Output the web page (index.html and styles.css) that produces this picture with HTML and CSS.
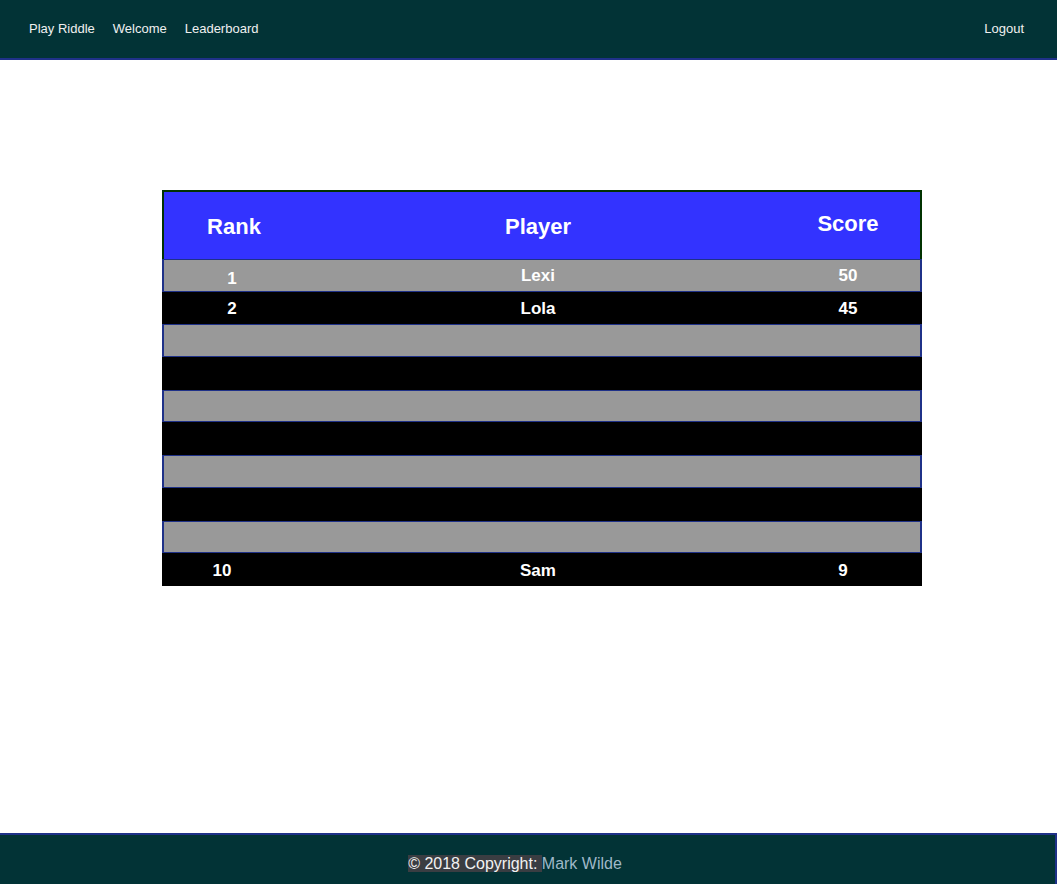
FILE: index.html
```html
<!DOCTYPE html>
<html lang="en">
<head>
<meta charset="utf-8">
<title>Leaderboard</title>
<link rel="stylesheet" href="styles.css">
</head>
<body>
<nav class="navbar">
  <ul class="nav-left">
    <li><a href="#">Play Riddle</a></li>
    <li><a href="#">Welcome</a></li>
    <li><a href="#">Leaderboard</a></li>
  </ul>
  <a class="logout" href="#">Logout</a>
</nav>
<main class="main">
  <div class="board">
    <div class="row head">
      <div class="c1">Rank</div>
      <div class="c2">Player</div>
      <div class="c3">Score</div>
    </div>
    <div class="row odd"><div class="c1 one">1</div><div class="c2">Lexi</div><div class="c3">50</div></div>
    <div class="row even"><div class="c1">2</div><div class="c2">Lola</div><div class="c3">45</div></div>
    <div class="row odd"><div class="c1"></div><div class="c2"></div><div class="c3"></div></div>
    <div class="row even"><div class="c1"></div><div class="c2"></div><div class="c3"></div></div>
    <div class="row odd"><div class="c1"></div><div class="c2"></div><div class="c3"></div></div>
    <div class="row even"><div class="c1"></div><div class="c2"></div><div class="c3"></div></div>
    <div class="row odd"><div class="c1"></div><div class="c2"></div><div class="c3"></div></div>
    <div class="row even"><div class="c1"></div><div class="c2"></div><div class="c3"></div></div>
    <div class="row odd"><div class="c1"></div><div class="c2"></div><div class="c3"></div></div>
    <div class="row even"><div class="c1 ten">10</div><div class="c2">Sam</div><div class="c3 nine">9</div></div>
  </div>
</main>
<footer class="footer">
  <p class="foot-text"><span class="copy">© 2018 Copyright: </span><a class="author" href="#">Mark Wilde</a></p>
</footer>
</body>
</html>
```
FILE: styles.css
```css
* { box-sizing: border-box; }
html, body { margin: 0; padding: 0; }
body {
  font-family: "Liberation Sans", Arial, Helvetica, sans-serif;
  display: flex;
  flex-direction: column;
  min-height: 100vh;
  background: #ffffff;
}
a { text-decoration: none; }

.navbar {
  height: 60px;
  background: #023336;
  border-bottom: 2px solid #1f3188;
  display: flex;
  align-items: center;
  justify-content: space-between;
  padding: 0 33px 2px 29px;
}
.nav-left {
  list-style: none;
  margin: 0;
  padding: 0;
  display: flex;
  gap: 18px;
}
.nav-left a, .logout {
  color: #f0f0f0;
  font-size: 13px;
}

.main {
  flex: 1;
  padding: 130px 0 0 162px;
  display: flex;
  justify-content: flex-start;
}
.board {
  width: 760px;
  align-self: flex-start;
}
.row {
  display: grid;
  grid-template-columns: 136px 476px 1fr;
  align-items: center;
  color: #ffffff;
  font-weight: bold;
  font-size: 17px;
  text-align: center;
  height: 32.7px;
  padding-top: 2px;
}
.head {
  height: 69px;
  background: #3333ff;
  border: 2px solid #013201;
  border-bottom: none;
  font-size: 22px;
  padding-top: 0;
}
.head .c1 { padding-left: 4px; padding-top: 2px; }
.head .c2 { padding-top: 2px; }
.head .c3 { padding-top: 0; margin-top: -3px; }
.odd {
  background: #999999;
  border: 2px solid #1f3188;
  border-top-width: 1px;
  border-bottom-width: 1px;
}
.even {
  background: #000000;
  padding-left: 2px;
  padding-right: 2px;
}
.one { padding-top: 5px; }
.ten { padding-right: 20px; }
.nine { padding-right: 10px; }

.footer {
  height: 51px;
  background: #023336;
  border-top: 2px solid #1f3188;
  border-right: 2px solid #1f3188;
  display: flex;
  align-items: center;
  justify-content: center;
  font-size: 16px;
  padding: 8px 25px 0 0;
}
.foot-text { margin: 0; }
.copy {
  background: #3a3d42;
  color: #f2f2f2;
}
.author {
  color: #9fb8c8;
}
```
